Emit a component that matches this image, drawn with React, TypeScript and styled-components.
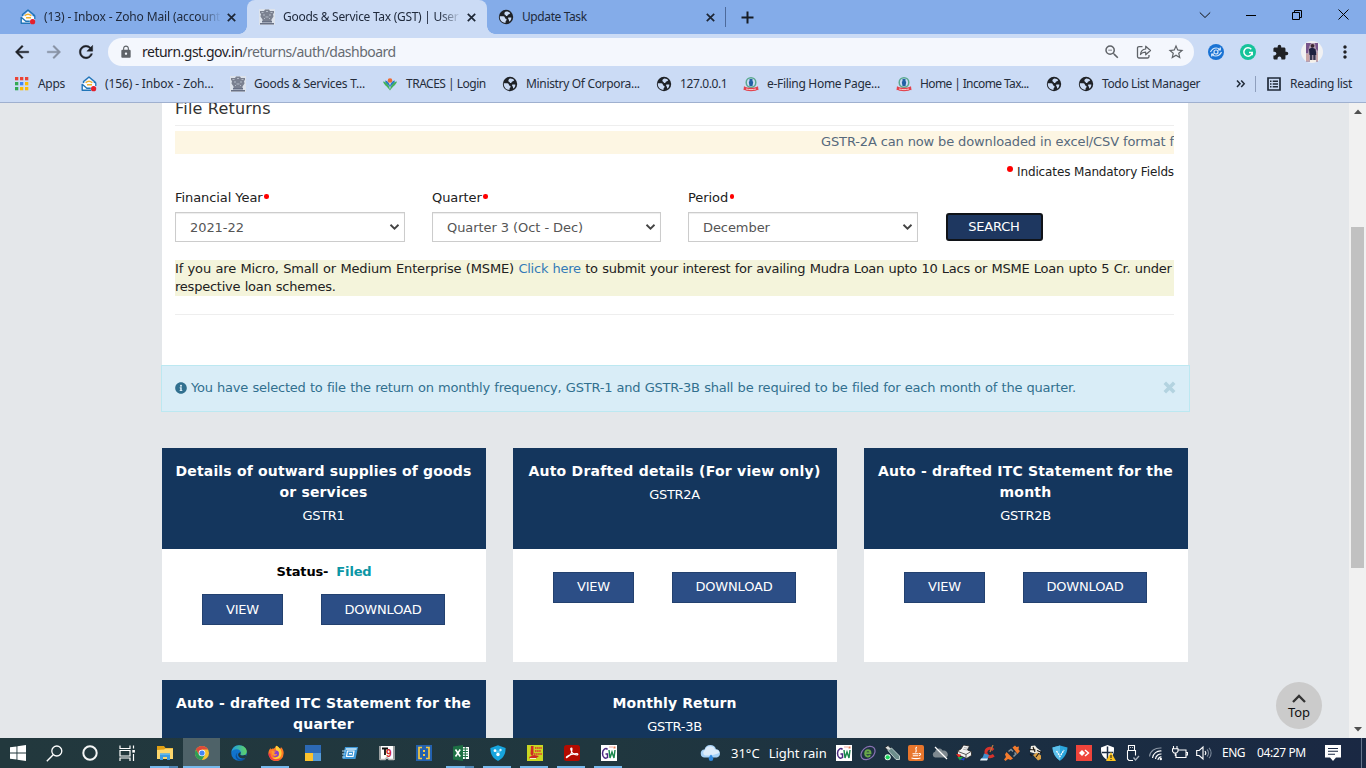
import React from "react";
import styled, { createGlobalStyle } from "styled-components";
import { FaInfoCircle } from "react-icons/fa";
import {
  MdArrowBack,
  MdArrowForward,
  MdRefresh,
  MdLock,
  MdZoomOut,
  MdStarBorder,
  MdExtension,
  MdMoreVert,
} from "react-icons/md";

const Global = createGlobalStyle`
  *, *::before, *::after { box-sizing: border-box; }
  body { margin: 0; overflow: hidden; }
`;

const uiFont = `"Noto Sans", "Open Sans", sans-serif`;
const pageFont = `"DejaVu Sans", sans-serif`;

const Screen = styled.div`
  width: 1366px;
  height: 768px;
  display: flex;
  flex-direction: column;
  overflow: hidden;
  font-family: ${uiFont};
`;

/* ---------- Browser frame ---------- */

const TabStrip = styled.div`
  display: flex;
  height: 34px;
  flex: none;
  background: #84ace9;
`;

const Tab = styled.div<{ $active?: boolean; $width: number; $pad: number }>`
  position: relative;
  display: flex;
  align-items: center;
  width: ${(p) => p.$width}px;
  height: 34px;
  padding: 0 11px 0 ${(p) => p.$pad}px;
  border-radius: 8px 8px 0 0;
  background: ${(p) => (p.$active ? "#cbdbf5" : "transparent")};
  &::before,
  &::after {
    content: "";
    display: ${(p) => (p.$active ? "block" : "none")};
    position: absolute;
    bottom: 0;
    width: 8px;
    height: 8px;
  }
  &::before {
    left: -8px;
    background: radial-gradient(circle at 0 0, transparent 7.5px, #cbdbf5 8px);
  }
  &::after {
    right: -8px;
    background: radial-gradient(circle at 100% 0, transparent 7.5px, #cbdbf5 8px);
  }
`;

const TabTitle = styled.span<{ $ls?: number; $fade?: boolean }>`
  flex: 1;
  margin: 0 6px 0 8px;
  overflow: hidden;
  white-space: nowrap;
  font-size: 12px;
  line-height: 18px;
  letter-spacing: ${(p) => p.$ls ?? 0}px;
  color: #202a3c;
  ${(p) => p.$fade && "mask-image: linear-gradient(90deg, #000 88%, transparent);"}
`;

const TabDivider = styled.div`
  width: 1px;
  height: 20px;
  margin: 7px 15px 0 -1px;
  background: #4d6a9b;
`;

const NewTab = styled.div`
  display: flex;
  align-items: center;
  flex: 1;
`;

const WindowButtons = styled.div`
  display: flex;
  height: 29px;
`;

const WindowButton = styled.div`
  width: 46px;
  display: flex;
  align-items: center;
  justify-content: center;
`;

const Toolbar = styled.div`
  display: flex;
  align-items: center;
  height: 36px;
  flex: none;
  padding: 0 0 0 12px;
  background: #cbdbf5;
`;

const NavIcon = styled.span<{ $dim?: boolean }>`
  display: flex;
  width: 32px;
  color: ${(p) => (p.$dim ? "#8791a3" : "#1d2026")};
  path:not([fill="none"]) {
    stroke: currentColor;
    stroke-width: 0.5px;
  }
`;

const AddressBar = styled.div`
  display: flex;
  align-items: center;
  width: 1086px;
  height: 28px;
  padding: 0 9px 0 11px;
  border-radius: 14px;
  background: #f4f7fd;
  color: #5f6368;
`;

const Url = styled.span`
  flex: 1;
  margin-left: 9px;
  font-size: 14px;
  line-height: 20px;
  letter-spacing: -0.5px;
  color: #666b72;
  b {
    font-weight: 400;
    color: #1f2226;
  }
`;

const AddressActions = styled.div`
  display: flex;
  align-items: center;
  gap: 15px;
`;

const Extensions = styled.div`
  display: flex;
  flex: 1;
  align-items: center;
  padding-left: 14px;
  gap: 16px;
  color: #202124;
`;

const Profile = styled.div`
  display: flex;
  flex: none;
  align-items: center;
  gap: 12px;
  margin-left: -4px;
`;

const Bookmarks = styled.div`
  display: flex;
  align-items: center;
  height: 33px;
  flex: none;
  padding-left: 14px;
  padding-bottom: 4px;
  background: #cbdbf5;
  border-bottom: 1px solid #9fb0cf;
`;

const Bookmark = styled.div<{ $width: number; $gap?: number; $ls?: number }>`
  display: flex;
  align-items: center;
  width: ${(p) => p.$width}px;
  gap: ${(p) => p.$gap ?? 8}px;
  flex: none;
  white-space: nowrap;
  font-size: 12px;
  line-height: 18px;
  letter-spacing: ${(p) => p.$ls ?? -0.3}px;
  color: #252d3b;
  svg {
    flex: none;
  }
`;

const BookmarkDivider = styled.div`
  width: 1px;
  height: 16px;
  margin-right: 11px;
  background: #8f9fbd;
`;

/* ---------- GST page ---------- */

const Viewport = styled.div`
  position: relative;
  display: flex;
  flex: 1;
  min-height: 0;
  background: #e4e7ea;
  font-family: ${pageFont};
`;

const Page = styled.main`
  flex: 1;
  overflow: hidden;
  padding-left: 162px;
`;

const Panel = styled.section`
  width: 1026px;
  height: 262px;
  padding: 0 14px 0 13px;
  background: #fff;
`;

const PanelTitle = styled.h4`
  height: 23px;
  margin: 0;
  border-bottom: 1px solid #eee;
  font-size: 16px;
  font-weight: 400;
  line-height: 12px;
  letter-spacing: 0.2px;
  color: #333;
`;

const Marquee = styled.div`
  height: 23px;
  margin-top: 5px;
  padding-left: 646px;
  overflow: hidden;
  white-space: nowrap;
  background: #fdf6e3;
  font-size: 13px;
  line-height: 21px;
  letter-spacing: -0.13px;
  color: #56697c;
`;

const Dot = styled.i<{ $size: number; $gap: number; $lift: number }>`
  display: inline-block;
  width: ${(p) => p.$size}px;
  height: ${(p) => p.$size}px;
  margin: 0 ${(p) => p.$gap}px;
  border-radius: 50%;
  vertical-align: ${(p) => p.$lift}px;
  background: #f00;
`;

const Mandatory = styled.p`
  margin: 9px 0 0;
  text-align: right;
  font-size: 12px;
  line-height: 18px;
  letter-spacing: -0.13px;
  color: #212121;
`;

const FormRow = styled.div`
  display: grid;
  grid-template-columns: 230px 229px 230px 99px;
  gap: 27px;
  align-items: end;
  margin-top: 7px;
`;

const Field = styled.label`
  display: block;
  font-size: 13px;
  line-height: 20px;
  letter-spacing: -0.07px;
  color: #212121;
`;

const SelectBox = styled.div`
  display: flex;
  align-items: center;
  justify-content: space-between;
  height: 30px;
  margin-top: 4px;
  padding: 1px 4px 0 14px;
  border: 1px solid #ccc;
  box-shadow: inset 0 1px 1px rgba(0, 0, 0, 0.075);
  color: #555;
`;

const SearchButton = styled.button`
  height: 28px;
  margin: 0 1px 1px;
  padding: 0 1px 2px 0;
  border: 2px solid #101318;
  border-radius: 3px;
  background: #1e3760;
  font: 13px ${pageFont};
  letter-spacing: -0.2px;
  color: #fff;
`;

const Loan = styled.p`
  height: 36px;
  margin: 18px 0 18px;
  background: #f4f4db;
  white-space: nowrap;
  font-size: 13px;
  line-height: 18px;
  letter-spacing: -0.235px;
  word-spacing: 0.45px;
  color: #212121;
  a {
    color: #337ab7;
  }
`;

const LoanLead = styled.span`
  letter-spacing: -0.145px;
`;

const Rule = styled.div`
  height: 1px;
  background: #eee;
`;

const Notice = styled.div`
  display: flex;
  align-items: center;
  width: 1029px;
  height: 47px;
  margin-left: -1px;
  padding: 0 13px 2px;
  border: 1px solid #bce8f1;
  background: #d9edf7;
  font-size: 13px;
  letter-spacing: -0.223px;
  word-spacing: 0.45px;
  color: #31708f;
  span {
    flex: 1;
    margin-left: 4px;
    white-space: nowrap;
  }
`;

const Cards = styled.div`
  display: grid;
  grid-template-columns: repeat(3, 324px);
  column-gap: 27px;
  row-gap: 18px;
  margin-top: 36px;
`;

const Card = styled.article`
  height: 214px;
  background: #fff;
`;

const CardHead = styled.header`
  height: 101px;
  padding: 13px 9px 0 8px;
  background: #14365d;
  text-align: center;
  color: #fff;
`;

const CardTitle = styled.h5<{ $tracking: number }>`
  margin: 0;
  font-size: 14px;
  font-weight: 700;
  line-height: 21px;
  letter-spacing: ${(p) => p.$tracking}px;
`;

const CardCode = styled.p`
  margin: 3px 0 0;
  font-size: 13px;
  line-height: 20px;
  letter-spacing: -0.3px;
`;

const Status = styled.p`
  margin: 0;
  padding-top: 13px;
  text-align: center;
  font-size: 13px;
  font-weight: 700;
  line-height: 20px;
  letter-spacing: -0.15px;
  color: #000;
  em {
    margin-left: 8px;
    font-style: normal;
    color: #0b96a5;
  }
`;

const CardActions = styled.div<{ $top: number }>`
  display: flex;
  gap: 38px;
  padding: ${(p) => p.$top}px 0 0 40px;
`;

const CardButton = styled.button<{ $width: number; $raised: boolean }>`
  width: ${(p) => p.$width}px;
  height: 31px;
  padding: 0 0 ${(p) => (p.$raised ? 2 : 0)}px;
  border: 1px solid #23416f;
  background: #2c4e86;
  font: 13px ${pageFont};
  letter-spacing: -0.2px;
  color: #fff;
`;

const TopButton = styled.div`
  position: absolute;
  right: 44px;
  bottom: 9px;
  display: flex;
  flex-direction: column;
  align-items: center;
  width: 46px;
  height: 47px;
  padding-top: 10px;
  border-radius: 50%;
  background: #cbcbcb;
  font: 13px/13px ${uiFont};
  color: #111;
`;

const ScrollBar = styled.div`
  display: flex;
  flex-direction: column;
  align-items: center;
  width: 17px;
  padding: 5px 0 5px;
  background: #f1f1f1;
`;

const ScrollTrack = styled.div`
  flex: 1;
  width: 13px;
  padding-top: 111px;
`;

const ScrollThumb = styled.div`
  height: 341px;
  background: #c1c1c1;
`;

/* ---------- Windows taskbar ---------- */

const Taskbar = styled.footer`
  display: flex;
  height: 30px;
  flex: none;
  background: linear-gradient(90deg, #22383d 0%, #20373f 45%, #1b2f42 72%, #1a2843 100%);
  color: #fff;
`;

const TaskItem = styled.div<{ $width?: number; $open?: boolean; $active?: boolean; $multi?: boolean }>`
  position: relative;
  display: flex;
  align-items: center;
  justify-content: center;
  width: ${(p) => p.$width ?? 37}px;
  height: 30px;
  background: ${(p) => (p.$active ? "#4e6268" : "transparent")};
  &::after {
    content: "";
    display: ${(p) => (p.$open ? "block" : "none")};
    position: absolute;
    left: ${(p) => (p.$active ? 0 : 4)}px;
    right: ${(p) => (p.$active ? 0 : 5)}px;
    bottom: 0;
    height: 2px;
    background: ${(p) =>
      p.$multi ? "linear-gradient(90deg, #76b9ed 68%, #4f86b3 68%)" : "#76b9ed"};
  }
`;

const Weather = styled.div`
  display: flex;
  align-items: center;
  gap: 9px;
  width: 132px;
  margin-left: 73px;
  font-size: 13px;
  letter-spacing: 0;
  white-space: nowrap;
`;

const Tray = styled.div`
  display: flex;
`;

const TrayItem = styled.div`
  display: flex;
  align-items: center;
  justify-content: center;
  width: 24px;
  height: 30px;
`;

const TrayText = styled.div<{ $width: number; $ls: number; $start?: number }>`
  width: ${(p) => p.$width}px;
  margin-left: ${(p) => p.$start ?? 0}px;
  font-size: 12px;
  line-height: 29px;
  white-space: nowrap;
  letter-spacing: ${(p) => p.$ls}px;
`;

const ShowDesktop = styled.div`
  width: 1px;
  margin-left: 20px;
  background: #66748b;
`;

/* ---------- Icons ---------- */

const Icon = ({ size = 16, box = 16, children }: { size?: number; box?: number; children: React.ReactNode }) => (
  <svg width={size} height={size} viewBox={`0 0 ${box} ${box}`} fill="none">
    {children}
  </svg>
);

const ZohoIcon = () => (
  <Icon>
    <path d="M1.500 8.500 8 2.500l6.500 6V14h-13z" fill="#f8fbff" />
    <path d="M2.500 7V5.500L8 1l5.500 4.500V7M1.200 8v6.300h9M1.200 8.300l4.600 3.900h4" stroke="#2175b8" strokeWidth="1.400" strokeLinejoin="round" />
    <path d="M13.500 5.500 14.800 7v3" stroke="#2175b8" strokeWidth="1.300" />
    <path d="M4.700 6.800c2-1.800 4.600-1.800 6.600 0M6 8.800h5" stroke="#f2b02b" strokeWidth="1.500" />
    <circle cx="12.600" cy="12.700" r="2.600" fill="#e4202c" />
  </Icon>
);

const EmblemIcon = () => (
  <Icon>
    <path d="M0 0h16v16H0z" fill="#dde3ec" />
    <path d="M1 2h4l1-1.500h4L11 2h4v2l-1 1 .5 2.500-2 3v1.500h-9v-1.500l-2-3L2 5 1 4z" fill="#7b8190" />
    <path d="M3 12.700h10M1 14.700h14" stroke="#687084" strokeWidth="1.500" />
    <path d="M2.500 3.500h2M7 2.500h2M11.500 3.500h2M4 6h2M10 6h2M6.500 8h3M5 9.500h1M10 9.500h1" stroke="#c3cad6" strokeWidth=".8" />
  </Icon>
);

const GlobeIcon = () => (
  <Icon>
    <circle cx="8" cy="8" r="7.200" fill="#1f2227" />
    <path d="M1.800 7.200h3.400c1.600 0 1.600 1.200 1.800 2 .2.700 1.600.3 1.600 1.500 0 1-1 .9-1 1.800v1.300C4 13.800 1.600 11 1.800 7.200z" fill="#cbdbf5" />
    <path d="M8.200 2.600c2-.1 3.300.7 4 1.700-.6.7-.9 1-1.800 1.100-.9.100-.5 1.500-1.500 1.700-1.200.2-1-.9-1.900-1.300-1.100-.5-.8-2.700 1.200-3.200zM10.400 8.600h2.900c.2 1.500-.6 3-1.700 4-.8-.3-.3-1.500-.9-2.100-.5-.5-.9-1.300-.3-1.900z" fill="#cbdbf5" />
  </Icon>
);

const TracesIcon = () => (
  <Icon>
    <path d="M1 5.500c4 .5 6 3 7 8.500 1-5.500 3-8 7-8.500-1 3.500-4 4.500-7 9C5 10 2 9 1 5.500z" fill="#43b25b" />
    <path d="M3 4.500c2.800.5 4.300 2.200 5 5.500.7-3.300 2.200-5 5-5.500-.5 2.800-3.500 3.700-5 7-1.500-3.300-4.500-4.200-5-7z" fill="#2878be" />
    <circle cx="8" cy="4.500" r="2.300" fill="#ee6b32" />
  </Icon>
);

const TaxIcon = () => (
  <Icon>
    <circle cx="8" cy="6.500" r="4.800" stroke="#5aa98f" strokeWidth="1.500" />
    <path d="M6.500 3h3v2l.7 1-.7 4h-3l-.7-4 .7-1z" fill="#2260a4" />
    <path d="M1 10.200c4.300 2 9.700 2 14 0l.5 4c-1.500-.3-2 .3-3 .5-3 .6-6 .6-9 0-1-.2-1.500-.8-3-.5z" fill="#e3434d" />
    <path d="M3 13c3.500.8 6.500.8 10 0" stroke="#f9c7ca" />
  </Icon>
);

const appColors = ["#ea4335", "#ea4335", "#ea4335", "#34a853", "#4285f4", "#fbbc05", "#34a853", "#fbbc05", "#fbbc05"];

const AppsIcon = () => (
  <Icon>
    {appColors.map((c, i) => (
      <rect key={i} x={1 + (i % 3) * 5} y={1 + Math.floor(i / 3) * 5} width="3.300" height="3.300" fill={c} />
    ))}
  </Icon>
);

const CloseIcon = () => (
  <Icon size={9} box={9}>
    <path d="m.8.800 7.400 7.400M8.200.8.800 8.200" stroke="#1d2635" strokeWidth="1.700" />
  </Icon>
);

const ShareIcon = () => (
  <Icon>
    <path d="M6.500 2.600H3a1.500 1.500 0 0 0-1.500 1.500v8.400A1.500 1.500 0 0 0 3 14h8.500a1.500 1.500 0 0 0 1.500-1.500V11" stroke="#5f6368" strokeWidth="1.300" />
    <path d="M4.500 10.500C4.800 7 6.700 5.300 9.700 5V2.200l4.800 4.300-4.800 4.300V8.200c-2.400-.1-4 .6-5.200 2.300z" stroke="#5f6368" strokeWidth="1.200" strokeLinejoin="round" />
  </Icon>
);

const SyncExtension = () => (
  <Icon>
    <circle cx="8" cy="8" r="8" fill="#1a73d4" />
    <path d="M2.500 8C4 5 6 4 8.200 4c1.600 0 2.700.5 3.800 1.400M13.500 8c-1.500 3-3.500 4-5.700 4-1.600 0-2.700-.5-3.800-1.400M12.300 3.500v2.300H10M3.700 12.500v-2.300H6" stroke="#d9e9fb" strokeWidth="1.200" />
    <circle cx="8" cy="8" r="2" stroke="#d9e9fb" strokeWidth="1.200" />
  </Icon>
);

const GrammarIcon = () => (
  <Icon>
    <circle cx="8" cy="8" r="8" fill="#15c39a" />
    <path d="M11.300 5.300A4.200 4.200 0 1 0 12.200 8.600H9M12.200 8.600v2.600" stroke="#fff" strokeWidth="1.500" />
  </Icon>
);

const AvatarIcon = () => (
  <Icon size={22} box={22}>
    <circle cx="11" cy="11" r="11" fill="#f1f1f3" />
    <path d="M5 2h12v19H5z" fill="#b5a0b4" />
    <path d="M5 2h5l-2 4-1 6H5zM14 2h3v8l-2-2z" fill="#76538a" />
    <circle cx="11.500" cy="4.800" r="1.900" fill="#3a2530" />
    <path d="m8 8 3-1.500L14.500 8l1 6h-7z" fill="#1e2140" />
    <path d="M9 14h2.200v5H9zM12.300 14h2.200v5h-2.200z" fill="#35354e" />
    <path d="M5 13h3v7H5zM15.500 12H17v8h-1.500z" fill="#c9a5a6" />
    <path d="M9 19h6v2H9z" fill="#f4efe8" />
  </Icon>
);

const ReadingListIcon = () => (
  <Icon size={14} box={14}>
    <path d="M1 1h12v12H1z" stroke="#202a38" strokeWidth="1.700" />
    <path d="M3 4.300h1.500M3 7h1.500M3 9.700h1.500M5.700 4.300H11M5.700 7H11M5.700 9.700H11" stroke="#202a38" strokeWidth="1.400" />
  </Icon>
);

const SelectArrow = () => (
  <Icon size={11} box={11}>
    <path d="m1.500 2.800 4 3.800 4-3.800" stroke="#444" strokeWidth="1.900" />
  </Icon>
);

const WindowsIcon = () => (
  <Icon>
    <path d="M0 2.300 6.500 1.400v6.100H0zM7.400 1.200 16 0v7.500H7.400zM0 8.400h6.500v6.200L0 13.700zM7.400 8.400H16V16l-8.600-1.200z" fill="#fff" />
  </Icon>
);

const SearchIcon = () => (
  <Icon size={17} box={17}>
    <circle cx="10.800" cy="6" r="5" stroke="#fff" strokeWidth="1.300" />
    <path d="M7.200 9.700.8 16.200" stroke="#fff" strokeWidth="1.400" />
  </Icon>
);

const CortanaIcon = () => (
  <Icon>
    <circle cx="8" cy="8" r="6.700" stroke="#f4f6f6" strokeWidth="2" />
  </Icon>
);

const TaskViewIcon = () => (
  <Icon size={17} box={17}>
    <path d="M1 .5v3h10v-3M1 16v-3h10v3M1 5.500h10v5.500H1zM14.500.5v3M14.500 9v7" stroke="#fff" strokeWidth="1.200" />
    <path d="M13.300 5h2.600v2.600h-2.600z" fill="#fff" />
  </Icon>
);

const FolderIcon = () => (
  <Icon>
    <path d="M0 1h7l1.500 2H16v11H0z" fill="#e0a014" />
    <path d="M0 5l7-.5L8.500 3.500H16V14H0z" fill="#fdd76c" />
    <path d="M3 15V8.500h10V15h-3v-3H6v3z" fill="#3d9be0" />
    <path d="M3 8.500h10V10H3z" fill="#5fb6ee" />
  </Icon>
);

const ChromeIcon = () => (
  <Icon>
    <circle cx="8" cy="8" r="7" fill="#f6c332" />
    <path d="M1.900 4.600A7 7 0 0 1 14.100 4.600H8L5 9.700z" fill="#dc4a3a" />
    <path d="M1.900 4.500A7 7 0 0 0 7.800 15l3.200-5.300-6 0z" fill="#2e9d55" />
    <circle cx="8" cy="8" r="3.300" fill="#fff" />
    <circle cx="8" cy="8" r="2.600" fill="#4285f4" />
  </Icon>
);

const EdgeIcon = () => (
  <Icon>
    <defs>
      <linearGradient id="edgeTop" x1="0" x2="1">
        <stop stopColor="#1c9be2" />
        <stop offset="1" stopColor="#61d463" />
      </linearGradient>
    </defs>
    <circle cx="8" cy="8" r="7.800" fill="#1173cc" />
    <path d="M.3 7.500C1 3 4.200.2 8 .2c4.500 0 7.800 3 7.800 6.300 0 2.500-1.800 4-4 4-1.800 0-2.600-.7-2.600-1.200 0-.5.7-.7.7-2C9.900 5.600 8 4.200 5.700 4.200 2.800 4.200.7 5.800.3 7.500z" fill="url(#edgeTop)" />
    <path d="M6.500 7.500c-2 3 0 7 4.500 6.800 1.700 0 2.800-.6 3.600-1.100-1.400 1.900-3.500 2.700-5.600 2.600C4.200 14.500 3.400 10 6.500 7.500z" fill="#0b4f9c" />
    <path d="M9.700 7.200c.3 1-.5 1.500-.4 2.200.2 1 2.700 1.600 5 .4l1.200 1.400-1.500 1.700c-4 1.700-7.500-1-6.800-3.800.3-1 1.400-1.900 2.500-1.900z" fill="#21383f" />
  </Icon>
);

const FirefoxIcon = () => (
  <Icon>
    <path d="M8 .8c2 .4 2.700 2 4 3 .8-.2.900-1.300.9-1.800 2 1.800 3 4.200 2.700 6.700A7.600 7.600 0 0 1 .4 8.500c0-2.300.8-4 2.200-5.500l.3 1.500C4 3.600 4.700 3.500 5.500 3.700 6.500 3.300 7.900 2.200 8 .8z" fill="#ff7a24" />
    <path d="M8 .8c2 .4 3 2 4 3 1.600 2 2.400 5.400.5 8-2 2.800-6 2.900-8 .7 3.500 1.300 6-1.300 5-4C8.900 6.200 7 4.500 8 .8z" fill="#ffcf37" />
    <path d="M.4 8.500c.5 7 8.400 9 12.600 5C8 16 2 14 2.500 8.500z" fill="#ef3351" />
    <circle cx="7.800" cy="8.700" r="3.200" fill="#8d3dcc" />
    <path d="M3.500 6c1.500-1 3 .5 4.500.4-.3 1-1.700 1-1.700 1.900 0 1.100 1.600 1.200 3 .5-.7 2.600-4 2.900-5.300.8z" fill="#ff9430" />
  </Icon>
);

const TilesIcon = () => (
  <Icon>
    <path d="M0 0h16v8H0z" fill="#2c69b5" />
    <path d="M0 8h8v8H0z" fill="#fcc22d" />
    <path d="M8 8h8v8H8z" fill="#569bd8" />
  </Icon>
);

const RunIcon = () => (
  <Icon>
    <path d="M3 2h13l-2.500 12H.5z" fill="#3e98d8" />
    <path d="M4 3.200h10.800l-.4 1.600H3.600z" fill="#d1ebfb" />
    <path d="M5.500 6H12l-1 5.500H4.500z" stroke="#fff" strokeWidth="1.200" />
    <path d="M0 6h4M0 9h3M0 12h3" stroke="#a9d6f2" />
    <path d="M7 8h3v1.500H7z" fill="#fff" />
  </Icon>
);

const iconText = { fontFamily: "Liberation Sans", fontWeight: 700 };

const TallyIcon = () => (
  <Icon>
    <path d="M2 1h12v13H2z" fill="#fff" />
    <path d="M1 1v14M15 1v14M1 14.500h5l2-2 2 2h5" stroke="#bbb" strokeWidth="1.600" />
    <path d="M3 3.500h6M6 3.500V10" stroke="#111" strokeWidth="1.800" />
    <text x="7" y="12" fontSize="10" fill="#d11d2a" {...iconText}>9</text>
  </Icon>
);

const BracketIcon = () => (
  <Icon>
    <path d="M0 0h16v16H0z" fill="#2462b0" />
    <path d="M6 2.500H3v11h3M10 2.500h3v11h-3" stroke="#f5c942" strokeWidth="1.700" />
    <path d="M7 5h2v2H7zM7 9h2v2H7z" fill="#f5c942" />
  </Icon>
);

const ExcelIcon = () => (
  <Icon>
    <path d="M9 2h7v12H9z" fill="#fff" />
    <path d="M9 4h6M9 6.500h6M9 9h6M9 11.500h6M12.300 2v12" stroke="#1e7145" />
    <path d="M0 1.500 10 0v16L0 14.500z" fill="#1e7145" />
    <path d="m2.500 4.500 4.700 7M7.200 4.500l-4.700 7" stroke="#fff" strokeWidth="1.600" />
  </Icon>
);

const ShieldIcon = () => (
  <Icon>
    <path d="M8 .3 15.600 3c0 6-2 10-7.600 12.900C2.400 13 .4 9 .4 3z" fill="#17a5de" />
    <path d="M5 5.500h6L8 11z" fill="#4fbfea" />
    <circle cx="5" cy="5.700" r="1.400" fill="#fff" />
    <circle cx="10.500" cy="5" r="1.200" fill="#d6f2fd" />
    <circle cx="8" cy="9.500" r="1.700" fill="#fff" />
  </Icon>
);

const NoteIcon = () => (
  <Icon>
    <path d="M0 0h16v16H0z" fill="#c9d622" />
    <path d="M4 1h2.500v8L5 11 3.500 9zM2 12l5-2 5 1-4 3H3z" fill="#cf2a25" />
    <path d="M8 3h7M8 6h6M7 9h8" stroke="#dd5130" strokeWidth="1.800" strokeDasharray="1.500 .6" />
    <path d="M3 13.500h6" stroke="#f6f1d0" />
  </Icon>
);

const AcrobatIcon = () => (
  <Icon>
    <rect width="16" height="16" rx="2.500" fill="#b30b00" />
    <path d="M3 12.500c3-1.500 5-5 5-8.500 0-1.500-1.400-1.300-1.300 0 .3 3 3 6 6 6 1.800 0 1.500-1.400 0-1.400-4 0-7.500 1.300-9.700 2.900-1 .8-.8 1.500 0 1z" stroke="#fff" strokeWidth="1.100" />
  </Icon>
);

const GwIcon = () => (
  <Icon>
    <path d="M0 0h16v16H0z" fill="#fff" />
    <path d="M6.500 4.500C5 2.500 1.500 4 1.500 8.300c0 4.500 3 5.700 5 4.200V9H4.500" stroke="#4b2a80" strokeWidth="1.500" />
    <path d="m8 5 1 8 2-6 2 6 1-8" stroke="#19864b" strokeWidth="1.400" />
    <path d="M8 2h4" stroke="#f0a9a0" />
    <path d="M12.500 1.500h2v2h-2z" fill="#e57a53" />
  </Icon>
);

const CloudIcon = () => (
  <svg width="22" height="18" viewBox="0 0 22 18">
    <path d="M5 13.500a4 4 0 0 1-.5-8A6 6 0 0 1 16 5.300a4.200 4.200 0 0 1 1 8.200z" fill="#a8d2f7" />
    <path d="M5 11.500A3 3 0 0 1 5 6a5.300 5.300 0 0 1 10-.5c2 0 4 1 4.500 3-3 2-10 3.500-14.500 3z" fill="#dcecfb" />
    <path d="M11 10.500c1.500 2 2.300 3 2.300 4.300a2.300 2.300 0 0 1-4.600 0c0-1.300.8-2.300 2.300-4.300z" fill="#2f86dc" />
  </svg>
);

const LoopEIcon = () => (
  <Icon>
    <ellipse cx="8" cy="8" rx="7.800" ry="5.700" transform="rotate(-40 8 8)" stroke="#8a72b5" strokeWidth="1.200" />
    <path d="M5.200 8.300h5.300c0-4-5-4-5.300 0-.1 3.500 3.500 4 5 2" stroke="#69a84a" strokeWidth="1.900" />
  </Icon>
);

const UsbStickIcon = () => (
  <Icon>
    <path d="m1 2.500 3-2 3 3-3 2z" fill="#d9dedd" stroke="#111" strokeWidth=".7" />
    <path d="m4 5.500 3.500-2.500L15.500 11v3.500H12z" fill="#6d8e8c" stroke="#c9d9d6" strokeWidth=".9" />
    <circle cx="3.700" cy="12.300" r="3" fill="#e9fff1" />
    <circle cx="3.700" cy="12.300" r="2.100" fill="#19d45b" />
  </Icon>
);

const JavaIcon = () => (
  <Icon>
    <rect width="16" height="16" rx="2" fill="#e8762c" />
    <path d="M8.700 2C6 4.200 10 5 7.500 7.500M4.500 8.700h6M4.800 10.700h5.500M3.500 13c3 .9 6 .9 9 0M11 8.500c2.500-.3 2 1.500 0 2.200" stroke="#fff" strokeWidth="1.100" />
  </Icon>
);

const CloudOffIcon = () => (
  <Icon>
    <path d="M3 12.500A3 3 0 0 1 3 6.700C4 3 9 2.500 10.500 5.500c3-.5 5.500 1.500 5.300 4.500 0 1.500-1 2.500-2.500 2.500z" fill="#7e8990" />
    <path d="m3 2 12 12" stroke="#fff" strokeWidth="1.200" />
  </Icon>
);

const PrinterIcon = () => (
  <Icon>
    <path d="m5 4 2.500-4 6 1-2 4 4 1.500v4l-5 3-9-4V6z" fill="#f1f1f1" stroke="#222" strokeWidth=".8" />
    <path d="m2 6.500 8 3 5-3M10 9.500v4" stroke="#444" strokeWidth=".9" />
    <path d="m8 2.500 4 .8M7 4.200l4 .8" stroke="#999" strokeWidth=".7" />
    <path d="m0 9 3 4 2-3.500z" fill="#ee2b24" />
    <path d="m1.500 12 2.500 3.500L7 12z" fill="#20a84c" />
    <path d="m4 14.500 4 1 1-3z" fill="#2447d1" />
  </Icon>
);

const CCleanerIcon = () => (
  <Icon>
    <path d="M13.300 5C10 1.500 5.500 4 6 8c.6 3.800 4.500 4.800 7.800 2.300" stroke="#d8322b" strokeWidth="3" />
    <path d="M13 0 10 7" stroke="#b2793f" strokeWidth="1.300" />
    <path d="M4 8.500l5 1.500-1.500 4.500H.5C2.500 13 3.500 11 4 8.500z" fill="#3f8fce" />
    <path d="M1 13.500h7l-1 2H0z" fill="#e2edf6" />
  </Icon>
);

const PlugIcon = () => (
  <Icon>
    <path d="M8.500 2.500 11 .5l1.500 1.500L15 1.500l-.5 3L16 6l-2.500 3z" fill="#f47b2d" />
    <path d="M2.500 7 9 13.500l-2.500 1.500L4 14l-2.500 2L0 14.500 2 12 1 9.500z" fill="#f47b2d" />
    <path d="m4.500 6.500 2.500-2 2 2M9.500 11.500 12 9l-1.500-1.500" stroke="#889399" strokeWidth="1.500" />
  </Icon>
);

const BeeIcon = () => (
  <Icon>
    <path d="m3 1 4-.5 2 2.500 4 3-2 3-4-.5L2 7z" fill="#f1eee4" />
    <path d="m5 10 4-2.500 4 3V14l-3 1.500z" fill="#dda246" />
    <path d="m1.500 4.500 6 .5M4 11l-2-2M9 5.500l5 2M5 2l2 5M8 12l3-4" stroke="#1c1712" strokeWidth="1.100" />
  </Icon>
);

const BlueShieldIcon = () => (
  <Icon>
    <path d="M.5 2.500 8 .5l7.500 2C15 8.500 12.500 12.500 8 15.700 3.500 12.500 1 8.500.5 2.500z" fill="#2ba6dd" />
    <path d="M.5 2.500 8 .5V15.700C3.500 12.500 1 8.500.5 2.500z" fill="#5cc0ec" />
    <path d="m4.500 6 3.500 5.500L12 5" stroke="#fff" strokeWidth="1.300" strokeDasharray="2 .7" />
  </Icon>
);

const AnyDeskIcon = () => (
  <Icon>
    <path d="M0 0h16v16H0z" fill="#ef443b" />
    <path d="m6 5 3 3-3 3-3-3z" fill="#fff" />
    <path d="m9 5 3.500 3L9 11" stroke="#fff" strokeWidth="1.400" />
  </Icon>
);

const DefenderIcon = () => (
  <Icon>
    <path d="M7.500 0 14 2.500c.3 6-1.500 10-6.500 12.500C2.500 12.500.7 8.500 1 2.500z" fill="#fff" />
    <path d="M7.500 1.500V14M2 7.500h11" stroke="#1a2b43" strokeWidth="1.500" />
    <path d="m11 7 5 9H6z" fill="#fcc21d" />
    <path d="M11 10v3M11 14v1" stroke="#222" strokeWidth="1.100" />
  </Icon>
);

const UsbIcon = () => (
  <Icon>
    <path d="M4.500 5.500v-5h6v5M3.500 5.500h8v5M3.500 5.500V14l1.500 1.500h4" stroke="#fff" strokeWidth="1.100" />
    <path d="M6.300 2.500H7M8.200 2.500h.7" stroke="#fff" />
    <path d="m9.500 12.500 2 2.500 3.500-4" stroke="#aab3be" strokeWidth="1.300" />
  </Icon>
);

const WifiIcon = () => (
  <Icon>
    <path d="M1.500 11.500C2 6 7 2.500 13.500 3" stroke="#8d98a6" strokeWidth="1.100" />
    <path d="M4.500 13C5 8.500 9 5.500 13.500 6M7.500 14c.3-3 3-5.200 6-5M10 15c0-1.800 1.700-3.300 3.500-3" stroke="#fff" strokeWidth="1.200" />
    <circle cx="12.800" cy="14" r="1.200" fill="#fff" />
  </Icon>
);

const BatteryIcon = () => (
  <Icon>
    <path d="M6.500 5H14v7.500H4V9M14 7.500h1.500V10H14M1.500 1v2.500M5 1v2.500M.5 3.800H6v2.500L4.500 8H2L.5 6.300zM3.300 8v3" stroke="#fff" strokeWidth="1.100" />
  </Icon>
);

const VolumeIcon = () => (
  <Icon>
    <path d="M.7 5.500h2.500L7 2v12l-3.800-3.500H.7z" stroke="#fff" strokeWidth="1.100" />
    <path d="M9 6c1 1.200 1 2.800 0 4" stroke="#fff" strokeWidth="1.100" />
    <path d="M11 4.500c2 2 2 5 0 7M13 2.800c2.800 3 2.800 7.400 0 10.400" stroke="#7d8a9b" strokeWidth="1.100" />
  </Icon>
);

const ChatIcon = () => (
  <Icon>
    <path d="M0 0h16v12.500h-5L8 16l-3-3.500H0z" fill="#fff" />
    <path d="M3 3.500h10M3 6.300h10M3 9.200h7" stroke="#1a2843" strokeWidth="1.100" />
  </Icon>
);

/* ---------- Data ---------- */

interface ReturnCard {
  title: string;
  code: string;
  tracking: number;
  status?: string;
}

const returnCards: ReturnCard[] = [
  { title: "Details of outward supplies of goods or services", code: "GSTR1", tracking: 0.17, status: "Filed" },
  { title: "Auto Drafted details (For view only)", code: "GSTR2A", tracking: 0.24 },
  { title: "Auto - drafted ITC Statement for the month", code: "GSTR2B", tracking: 0.2 },
  { title: "Auto - drafted ITC Statement for the quarter", code: "GSTR2BQ", tracking: 0.2 },
  { title: "Monthly Return", code: "GSTR-3B", tracking: 0.1 },
];

const fields = [
  { label: "Financial Year", value: "2021-22" },
  { label: "Quarter", value: "Quarter 3 (Oct - Dec)" },
  { label: "Period", value: "December" },
];

const trayIcons = [
  GwIcon, LoopEIcon, UsbStickIcon, JavaIcon, CloudOffIcon, PrinterIcon, CCleanerIcon, PlugIcon,
  BeeIcon, BlueShieldIcon, AnyDeskIcon, DefenderIcon, UsbIcon, WifiIcon, BatteryIcon, VolumeIcon,
];

/* ---------- Sections ---------- */

const BrowserFrame = () => (
  <>
    <TabStrip>
      <Tab $width={247} $pad={20}>
        <ZohoIcon />
        <TabTitle $fade $ls={-0.13}>(13) - Inbox - Zoho Mail (accounts</TabTitle>
        <CloseIcon />
      </Tab>
      <Tab $active $width={240} $pad={12}>
        <EmblemIcon />
        <TabTitle $fade $ls={-0.29}>Goods &amp; Service Tax (GST) | User Dashboard</TabTitle>
        <CloseIcon />
      </Tab>
      <Tab $width={239} $pad={11}>
        <GlobeIcon />
        <TabTitle $ls={-0.4}>Update Task</TabTitle>
        <CloseIcon />
      </Tab>
      <TabDivider />
      <NewTab>
        <Icon size={13} box={13}>
          <path d="M6.500.5v12M.5 6.500h12" stroke="#171c25" strokeWidth="2" />
        </Icon>
      </NewTab>
      <WindowButtons>
        <WindowButton>
          <Icon size={12} box={12}><path d="m.8 3.500 5.200 5 5.200-5" stroke="#111" /></Icon>
        </WindowButton>
        <WindowButton>
          <Icon size={10} box={10}><path d="M0 5.500h10" stroke="#000" /></Icon>
        </WindowButton>
        <WindowButton>
          <Icon size={10} box={10}>
            <path d="M.5 2.500h7v7h-7zM2.500 2.500v-2h7v7h-2" stroke="#000" />
          </Icon>
        </WindowButton>
        <WindowButton>
          <Icon size={11} box={11}><path d="m.5.5 10 10M10.500.5l-10 10" stroke="#000" /></Icon>
        </WindowButton>
      </WindowButtons>
    </TabStrip>
    <Toolbar>
      <NavIcon><MdArrowBack size={20} /></NavIcon>
      <NavIcon $dim><MdArrowForward size={20} /></NavIcon>
      <NavIcon><MdRefresh size={20} /></NavIcon>
      <AddressBar>
        <MdLock size={14} />
        <Url><b>return.gst.gov.in</b>/returns/auth/dashboard</Url>
        <AddressActions>
          <MdZoomOut size={18} />
          <ShareIcon />
          <MdStarBorder size={18} />
        </AddressActions>
      </AddressBar>
      <Extensions>
        <SyncExtension />
        <GrammarIcon />
        <MdExtension size={17} />
        <Profile>
          <AvatarIcon />
          <MdMoreVert size={20} />
        </Profile>
      </Extensions>
    </Toolbar>
    <Bookmarks>
      <Bookmark $width={67} $ls={-0.3}><AppsIcon />Apps</Bookmark>
      <Bookmark $width={149} $ls={-0.13}><ZohoIcon />(156) - Inbox - Zoh...</Bookmark>
      <Bookmark $width={152} $ls={-0.24}><EmblemIcon />Goods &amp; Services T...</Bookmark>
      <Bookmark $width={120} $ls={-0.5}><TracesIcon />TRACES | Login</Bookmark>
      <Bookmark $width={154} $ls={-0.33}><GlobeIcon />Ministry Of Corpora...</Bookmark>
      <Bookmark $width={87} $ls={-0.4}><GlobeIcon />127.0.0.1</Bookmark>
      <Bookmark $width={153} $ls={-0.3}><TaxIcon />e-Filing Home Page...</Bookmark>
      <Bookmark $width={150} $ls={-0.62}><TaxIcon />Home | Income Tax...</Bookmark>
      <Bookmark $width={32}><GlobeIcon /></Bookmark>
      <Bookmark $width={158} $ls={-0.36}><GlobeIcon />Todo List Manager</Bookmark>
      <Bookmark $width={19}>
        <Icon size={10} box={10}>
          <path d="m1 1.500 3 3.200-3 3.200M5.200 1.500l3 3.200-3 3.200" stroke="#202a38" strokeWidth="1.500" />
        </Icon>
      </Bookmark>
      <BookmarkDivider />
      <Bookmark $width={90} $gap={9}><ReadingListIcon />Reading list</Bookmark>
    </Bookmarks>
  </>
);

const ReturnsForm = () => (
  <Panel>
    <PanelTitle>File Returns</PanelTitle>
    <Marquee>GSTR-2A can now be downloaded in excel/CSV format f</Marquee>
    <Mandatory><Dot $size={6} $gap={0} $lift={4} /> Indicates Mandatory Fields</Mandatory>
    <FormRow>
      {fields.map((f) => (
        <Field key={f.label}>
          {f.label}<Dot $size={4.5} $gap={1.5} $lift={3.5} />
          <SelectBox>{f.value}<SelectArrow /></SelectBox>
        </Field>
      ))}
      <SearchButton>SEARCH</SearchButton>
    </FormRow>
    <Loan>
      <LoanLead>If you are Micro, Small or Medium Enterprise (MSME)</LoanLead> <a>Click here</a> to submit your
      interest for availing Mudra Loan upto 10 Lacs or MSME Loan upto 5 Cr. under<br />
      respective loan schemes.
    </Loan>
    <Rule />
  </Panel>
);

const ReturnCards = () => (
  <Cards>
    {returnCards.map((c) => (
      <Card key={c.title}>
        <CardHead>
          <CardTitle $tracking={c.tracking}>{c.title}</CardTitle>
          <CardCode>{c.code}</CardCode>
        </CardHead>
        {c.status && <Status>Status-<em>{c.status}</em></Status>}
        <CardActions $top={c.status ? 12 : 23}>
          <CardButton $width={81} $raised={!c.status}>VIEW</CardButton>
          <CardButton $width={124} $raised={!c.status}>DOWNLOAD</CardButton>
        </CardActions>
      </Card>
    ))}
  </Cards>
);

const DesktopTaskbar = () => (
  <Taskbar>
    <TaskItem $width={36}><WindowsIcon /></TaskItem>
    <TaskItem $width={36}><SearchIcon /></TaskItem>
    <TaskItem $width={36}><CortanaIcon /></TaskItem>
    <TaskItem $width={38}><TaskViewIcon /></TaskItem>
    <TaskItem $open $multi><FolderIcon /></TaskItem>
    <TaskItem $open $active><ChromeIcon /></TaskItem>
    <TaskItem><EdgeIcon /></TaskItem>
    <TaskItem $open><FirefoxIcon /></TaskItem>
    <TaskItem><TilesIcon /></TaskItem>
    <TaskItem><RunIcon /></TaskItem>
    <TaskItem><TallyIcon /></TaskItem>
    <TaskItem><BracketIcon /></TaskItem>
    <TaskItem $open $multi><ExcelIcon /></TaskItem>
    <TaskItem $open><ShieldIcon /></TaskItem>
    <TaskItem $open><NoteIcon /></TaskItem>
    <TaskItem $open><AcrobatIcon /></TaskItem>
    <TaskItem $open><GwIcon /></TaskItem>
    <Weather><CloudIcon /><span>31°C</span><span>Light rain</span></Weather>
    <Tray>
      {trayIcons.map((TrayGlyph, i) => (
        <TrayItem key={i}><TrayGlyph /></TrayItem>
      ))}
    </Tray>
    <TrayText $start={6} $width={35} $ls={-0.5}>ENG</TrayText>
    <TrayText $width={68} $ls={-0.4}>04:27 PM</TrayText>
    <TaskItem $width={16}><ChatIcon /></TaskItem>
    <ShowDesktop />
  </Taskbar>
);

export default function App() {
  return (
    <Screen>
      <Global />
      <BrowserFrame />
      <Viewport>
        <Page>
          <ReturnsForm />
          <Notice>
            <FaInfoCircle size={12} />
            <span>
              You have selected to file the return on monthly frequency, GSTR-1 and GSTR-3B shall be required to be
              filed for each month of the quarter.
            </span>
            <Icon size={13} box={13}>
              <path d="m1.800 1.800 9.400 9.400M11.200 1.800l-9.400 9.400" stroke="#b3d3e0" strokeWidth="3.600" />
            </Icon>
          </Notice>
          <ReturnCards />
        </Page>
        <ScrollBar>
          <Icon size={8} box={8}><path d="M0 6h8L4 1.500z" fill="#505050" /></Icon>
          <ScrollTrack><ScrollThumb /></ScrollTrack>
          <Icon size={8} box={8}><path d="M0 2h8L4 6.500z" fill="#505050" /></Icon>
        </ScrollBar>
        <TopButton>
          <Icon size={14} box={14}><path d="m1 10 6-6 6 6" stroke="#333" strokeWidth="2.300" /></Icon>
          Top
        </TopButton>
      </Viewport>
      <DesktopTaskbar />
    </Screen>
  );
}
